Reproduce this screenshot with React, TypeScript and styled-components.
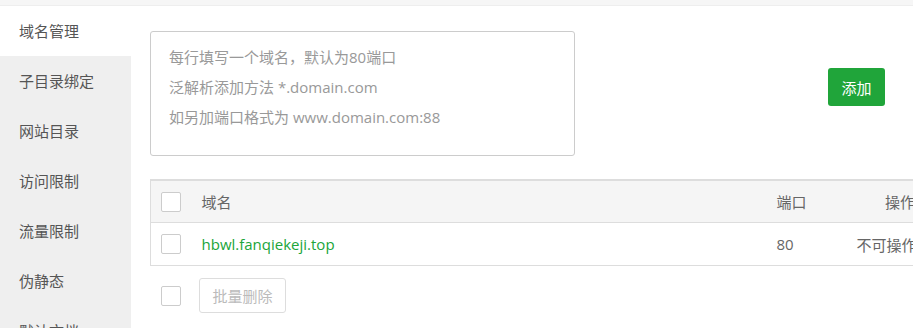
import React from "react";
import styled, { createGlobalStyle } from "styled-components";

const GlobalStyle = createGlobalStyle`
  html, body {
    margin: 0;
    padding: 0;
    background: #fff;
    overflow: hidden;
  }
  body {
    font-family: "Open Sans", "Noto Sans CJK SC", sans-serif;
    color: #666;
  }
`;

const menu = [
  "域名管理",
  "子目录绑定",
  "网站目录",
  "访问限制",
  "流量限制",
  "伪静态",
  "默认文档",
];

const domains = [{ name: "hbwl.fanqiekeji.top", port: 80 }];

export default function App() {
  return (
    <>
      <GlobalStyle />
      <TopBand />
      <Layout>
        <Sidebar>
          {menu.map((item, i) => (
            <MenuItem key={item} active={i === 0}>
              {item}
            </MenuItem>
          ))}
        </Sidebar>
        <Content>
          <AddRow>
            <DomainInput
              placeholder={
                "每行填写一个域名，默认为80端口\n泛解析添加方法 *.domain.com\n如另加端口格式为 www.domain.com:88"
              }
            />
            <GreenButton>添加</GreenButton>
          </AddRow>
          <Table>
            <colgroup>
              <col style={{ width: 41 }} />
              <col style={{ width: 575 }} />
              <col style={{ width: 80 }} />
              <col />
            </colgroup>
            <thead>
              <tr>
                <HeadCell>
                  <Checkbox />
                </HeadCell>
                <HeadCell>域名</HeadCell>
                <HeadCell>端口</HeadCell>
                <HeadCell align="right">操作</HeadCell>
              </tr>
            </thead>
            <tbody>
              {domains.map((d) => (
                <tr key={d.name}>
                  <Cell>
                    <Checkbox />
                  </Cell>
                  <Cell>
                    <DomainLink>{d.name}</DomainLink>
                  </Cell>
                  <Cell>{d.port}</Cell>
                  <Cell align="right">不可操作</Cell>
                </tr>
              ))}
            </tbody>
          </Table>
          <Footer>
            <Checkbox />
            <BatchButton>批量删除</BatchButton>
          </Footer>
        </Content>
      </Layout>
    </>
  );
}

const TopBand = styled.div`
  height: 5px;
  background: #f6f6f6;
  border-bottom: 1px solid #eee;
`;

const Layout = styled.div`
  display: flex;
  align-items: flex-start;
`;

const Sidebar = styled.div`
  width: 131px;
  flex-shrink: 0;
  background: #efefef;
  display: flex;
  flex-direction: column;
`;

const MenuItem = styled.div<{ active?: boolean }>`
  height: 50px;
  line-height: 50px;
  padding-left: 19px;
  font-size: 15px;
  color: #555;
  background: ${(p) => (p.active ? "#fff" : "transparent")};
  white-space: nowrap;
`;

const Content = styled.div`
  padding: 25px 0 0 19px;
  display: flex;
  flex-direction: column;
`;

const AddRow = styled.div`
  display: flex;
  align-items: flex-start;
`;

const DomainInput = styled.textarea`
  width: 425px;
  height: 125px;
  box-sizing: border-box;
  border: 1px solid #ccc;
  border-radius: 3px;
  padding: 10px 18px;
  font-family: "Open Sans", "Noto Sans CJK SC", sans-serif;
  font-size: 15px;
  line-height: 30px;
  resize: none;
  outline: none;
  &::placeholder {
    color: #999;
  }
`;

const GreenButton = styled.button`
  margin: 37px 0 0 253px;
  width: 57px;
  height: 38px;
  border: none;
  border-radius: 3px;
  background: #20a53a;
  color: #fff;
  font-family: "Open Sans", "Noto Sans CJK SC", sans-serif;
  font-size: 15px;
  padding: 0;
`;

const Table = styled.table`
  margin-top: 23px;
  width: 775px;
  table-layout: fixed;
  border-collapse: collapse;
  border-top: 2px solid #ddd;
  border-left: 1px solid #ddd;
  font-size: 15px;
`;

const HeadCell = styled.th<{ align?: string }>`
  height: 41px;
  padding: 0 10px;
  background: #f5f5f5;
  border-bottom: 1px solid #ddd;
  font-weight: normal;
  color: #666;
  text-align: ${(p) => p.align || "left"};
  vertical-align: middle;
  white-space: nowrap;
`;

const Cell = styled.td<{ align?: string }>`
  height: 42px;
  padding: 0 10px;
  border-bottom: 1px solid #ddd;
  color: #666;
  text-align: ${(p) => p.align || "left"};
  vertical-align: middle;
  white-space: nowrap;
`;

const Checkbox = styled.span`
  display: block;
  width: 18px;
  height: 18px;
  border: 1px solid #ccc;
  border-radius: 2px;
  background: #fff;
`;

const DomainLink = styled.a`
  color: #20a53a;
  text-decoration: none;
  cursor: pointer;
`;

const Footer = styled.div`
  display: flex;
  align-items: center;
  gap: 18px;
  margin-top: 12px;
  padding-left: 11px;
`;

const BatchButton = styled.button`
  width: 87px;
  height: 35px;
  border: 1px solid #ddd;
  border-radius: 3px;
  background: #fff;
  color: #bbb;
  font-family: "Open Sans", "Noto Sans CJK SC", sans-serif;
  font-size: 15px;
  padding: 0;
`;
